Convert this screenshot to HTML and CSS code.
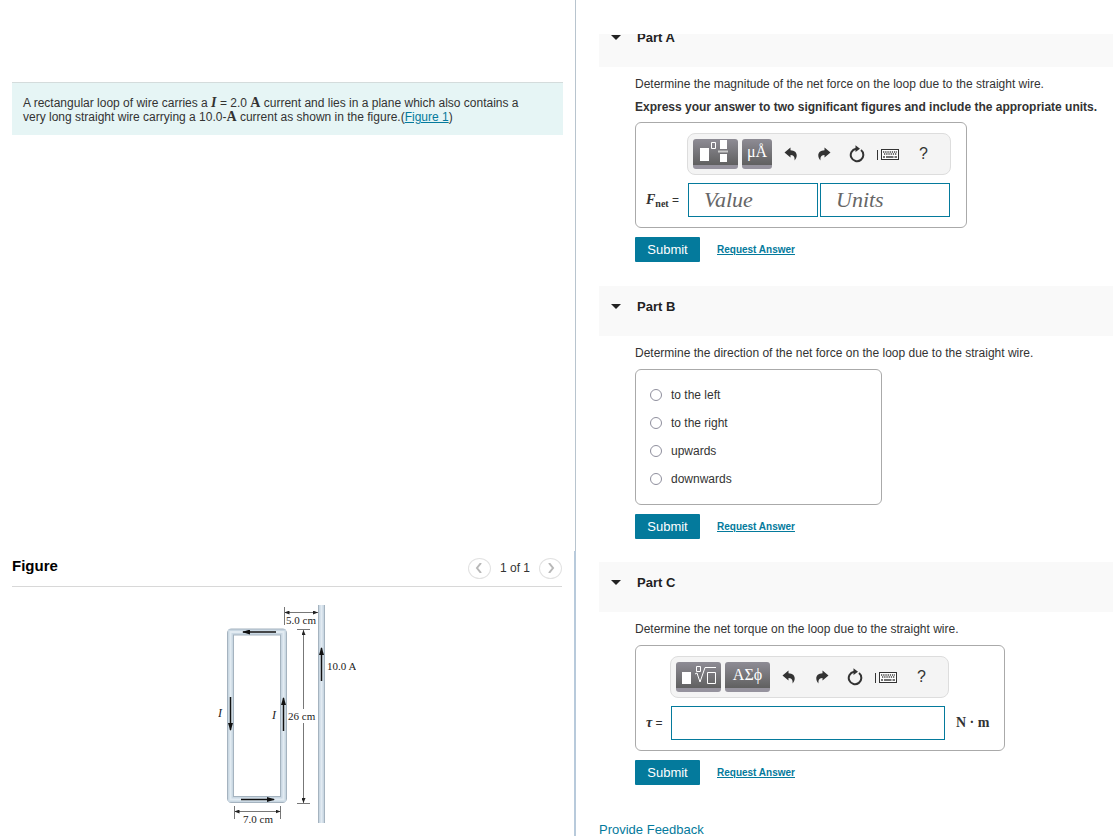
FILE: index.html
```html
<!DOCTYPE html>
<html lang="en">
  <head>
    <meta charset="UTF-8" />
    <meta name="viewport" content="width=device-width, initial-scale=1.0" />
    <title>Force on a Loop</title>
    <link rel="stylesheet" href="styles.css">
  </head>
  <body>
    <svg class="symbols" width="0" height="0" aria-hidden="true">
      <symbol id="undo" viewBox="0 0 14 14">
        <path d="M6.500 .5 L.5 5.500 L6.500 10.500 V8 C9.500 8 11 9.500 10.500 13.500 C14.500 9 13 3.500 6.500 3.300 Z" />
      </symbol>
      <symbol id="redo" viewBox="0 0 14 14">
        <path d="M7.500 .5 L13.500 5.500 L7.500 10.500 V8 C4.500 8 3 9.500 3.500 13.500 C-.5 9 1 3.500 7.500 3.300 Z" />
      </symbol>
      <symbol id="reset" viewBox="0 0 16 18">
        <path d="M12 5 A6.300 6.300 0 1 1 7 3.700" fill="none" stroke="#333" stroke-width="2" />
        <path d="M6.500 .3 L11 3.800 L6.500 7 Z" />
      </symbol>
      <symbol id="keyboard" viewBox="0 0 22 14">
        <path d="M.5 3 V13" stroke="#333" fill="none" />
        <rect x="4.500" y="2.500" width="17" height="10" fill="#fff" stroke="#333" />
        <path d="M6 5 H20 M7 7 H20" stroke="#444" stroke-width="1.300" stroke-dasharray="1.300 .9" fill="none" />
        <path d="M6 10 H8 M9 10 H16.500 M17.500 10 H20" stroke="#444" stroke-width="1.500" fill="none" />
      </symbol>
    </svg>

    <div class="page">
      <div class="left">
        <div class="problem">
          <div class="intro">
            A rectangular loop of wire carries a <i class="math">I</i> = 2.0 <span class="math">A</span> current and lies in a plane which also contains a very long straight wire carrying a 10.0-<span class="math">A</span> current as shown in the figure.(<a href="#figure">Figure 1</a>)
          </div>
        </div>
        <div class="figure" id="figure">
          <div class="figure-head">
            <h2>Figure</h2>
            <div class="pager">
              <button class="round" aria-label="Previous figure"><svg width="8" height="10"><path d="M6 0 L2 5 L6 10" /></svg></button>
              <span>1 of 1</span>
              <button class="round" aria-label="Next figure"><svg width="8" height="10"><path d="M2 0 L6 5 L2 10" /></svg></button>
            </div>
          </div>
          <svg class="diagram" width="138" height="220" viewBox="0 0 138 220">
            <defs>
              <marker id="head" markerWidth="8" markerHeight="5" refX="7" refY="2.500" orient="auto" markerUnits="userSpaceOnUse">
                <path d="M0 0 L8 2.500 L0 5 Z" fill="#111" />
              </marker>
              <marker id="dim" markerWidth="5" markerHeight="4" refX="5" refY="2" orient="auto-start-reverse" markerUnits="userSpaceOnUse">
                <path d="M0 0 L5 2 L0 4 Z" fill="#222" />
              </marker>
            </defs>
            <!-- loop and straight wire -->
            <rect class="tube-edge" x="12.500" y="28" width="53" height="167.500" rx="1" />
            <rect class="tube" x="12.500" y="28" width="53" height="167.500" />
            <rect class="tube-shine" x="12.500" y="28" width="53" height="167.500" />
            <path class="tube-edge" d="M103.500 1 V219" />
            <path class="tube" d="M103.500 1 V219" />
            <path class="tube-shine" d="M103.500 1 V219" />
            <!-- current arrows -->
            <g class="current">
              <path d="M58 28 H25" />
              <path d="M12.500 93 V126" />
              <path d="M65.500 127 V94" />
              <path d="M23 195.500 H56" />
              <path d="M103.500 77 V44" />
            </g>
            <!-- dimensions -->
            <g class="ticks">
              <path d="M66.500 3 V21 M79 25.500 H92 M79 199.500 H92 M16.500 202 V215 M62.500 202 V215" />
            </g>
            <g class="dims">
              <path d="M66.500 8.500 H100" marker-start="url(#dim)" marker-end="url(#dim)" />
              <path d="M85.500 105 V26" marker-end="url(#dim)" />
              <path d="M85.500 119 V199" marker-end="url(#dim)" />
              <path d="M16.500 207.500 H62.500" marker-start="url(#dim)" marker-end="url(#dim)" />
            </g>
            <text x="68" y="20">5.0 cm</text>
            <text x="109" y="66">10.0 A</text>
            <text x="70" y="116">26 cm</text>
            <text x="25" y="219">7.0 cm</text>
            <text class="it" x="0" y="113">I</text>
            <text class="it" x="54" y="115">I</text>
          </svg>
        </div>
      </div>

      <div class="right">
        <div class="part first">
          <div class="part-head"><span class="caret"></span><h3>Part A</h3></div>
          <div class="part-body">
            <p>Determine the magnitude of the net force on the loop due to the straight wire.</p>
            <p class="instruct">Express your answer to two significant figures and include the appropriate units.</p>
            <div class="answer">
              <div class="toolbar">
                <button class="tool wide" aria-label="Templates">
                  <svg width="45" height="26"><path d="M7 9 H16 V22 H7 Z M27 1 H34 V10 H27 Z M27 15 H34 V23 H27 Z" fill="#fff" /><path d="M18.500 3.500 H22.500 V9.500 H18.500 Z" fill="none" stroke="#fff" /><path d="M25 12.500 H35" stroke="#ccc" stroke-width="2" /></svg>
                </button>
                <button class="tool">μÅ</button>
                <button class="icon" aria-label="Undo"><svg width="14" height="14"><use href="#undo" /></svg></button>
                <button class="icon" aria-label="Redo"><svg width="14" height="14"><use href="#redo" /></svg></button>
                <button class="icon" aria-label="Reset"><svg width="16" height="18"><use href="#reset" /></svg></button>
                <button class="icon keys" aria-label="Keyboard shortcuts"><svg width="22" height="14"><use href="#keyboard" /></svg></button>
                <button class="icon">?</button>
              </div>
              <label class="lbl" for="value"><i class="math">F</i><span class="math sub">net</span> =</label>
              <div class="fields">
                <input type="text" id="value" placeholder="Value" />
                <input type="text" id="units" placeholder="Units" aria-label="Units" />
              </div>
            </div>
            <div class="actions"><button class="submit">Submit</button><a href="#">Request Answer</a></div>
          </div>
        </div>

        <div class="part">
          <div class="part-head"><span class="caret"></span><h3>Part B</h3></div>
          <div class="part-body">
            <p>Determine the direction of the net force on the loop due to the straight wire.</p>
            <div class="choices">
              <label><input type="radio" name="dir" />to the left</label>
              <label><input type="radio" name="dir" />to the right</label>
              <label><input type="radio" name="dir" />upwards</label>
              <label><input type="radio" name="dir" />downwards</label>
            </div>
            <div class="actions"><button class="submit">Submit</button><a href="#">Request Answer</a></div>
          </div>
        </div>

        <div class="part">
          <div class="part-head"><span class="caret"></span><h3>Part C</h3></div>
          <div class="part-body">
            <p>Determine the net torque on the loop due to the straight wire.</p>
            <div class="answer torque">
              <div class="toolbar">
                <button class="tool wide" aria-label="Templates">
                  <svg width="45" height="26"><path d="M6 10 H15 V22 H6 Z" fill="#fff" /><path d="M20.500 4.500 H24.500 V9.500 H20.500 Z M31.500 10.500 H39.500 V21.500 H31.500 Z M19 12 L21 11 L24 20 L29 5.500 H40" fill="none" stroke="#fff" /></svg>
                </button>
                <button class="tool wide">ΑΣϕ</button>
                <button class="icon" aria-label="Undo"><svg width="14" height="14"><use href="#undo" /></svg></button>
                <button class="icon" aria-label="Redo"><svg width="14" height="14"><use href="#redo" /></svg></button>
                <button class="icon" aria-label="Reset"><svg width="16" height="18"><use href="#reset" /></svg></button>
                <button class="icon keys" aria-label="Keyboard shortcuts"><svg width="22" height="14"><use href="#keyboard" /></svg></button>
                <button class="icon">?</button>
              </div>
              <label class="lbl" for="torque"><i class="math">τ</i> =</label>
              <div class="fields"><input type="text" id="torque" /></div>
              <span class="math unit">N · m</span>
            </div>
            <div class="actions"><button class="submit">Submit</button><a href="#">Request Answer</a></div>
          </div>
        </div>

        <a class="feedback" href="#">Provide Feedback</a>
      </div>
    </div>
  </body>
</html>
```

FILE: styles.css
```css
* {
  box-sizing: border-box;
}
body {
  margin: 0;
  background-color: #fff;
  color: #333;
  font: 12px/15px "Liberation Sans", Arial, sans-serif;
}
a {
  color: #047a9c;
}
button {
  border: 0;
  padding: 0;
  background: none;
  color: #333;
  font-family: inherit;
}
.symbols {
  position: absolute;
}
.page {
  display: grid;
  grid-template-columns: 576fr 537fr;
  height: 100vh;
  overflow: hidden;
}

/* left column */
.left {
  display: flex;
  flex-direction: column;
  min-height: 0;
}
.problem {
  flex: 1;
  padding: 82px 12px 0;
  border-right: 1px solid #b8c4ce;
}
.intro {
  padding: 13px 24px 11px 11px;
  border-top: 1px solid #d4dcdc;
  background-color: #e6f5f5;
  line-height: 14px;
}
.math {
  font-family: "Liberation Serif", serif;
  font-size: 14px;
  font-weight: bold;
  line-height: 1;
}
.figure {
  padding: 6px 12px 12px;
  border-right: 2px solid #b8cadb;
}
.figure-head {
  display: flex;
  justify-content: space-between;
  height: 30px;
  border-bottom: 1px solid #d8d8d8;
}
h2 {
  margin: 0;
  color: #000;
  font-size: 15px;
  line-height: 18px;
}
.pager {
  display: flex;
  align-items: center;
  gap: 9px;
  height: 22px;
}
.round {
  display: flex;
  align-items: center;
  justify-content: center;
  width: 23px;
  height: 21px;
  border: 1px solid #e2e2e2;
  border-radius: 50%;
}
.round path {
  fill: none;
  stroke: #b8b8b8;
  stroke-width: 2;
}
.diagram {
  display: block;
  margin: 17px auto 0;
}
.diagram text {
  font: 11px "Liberation Serif", serif;
  fill: #222;
}
.diagram .it {
  font-size: 12px;
  font-style: italic;
}
.tube-edge,
.tube,
.tube-shine {
  fill: none;
}
.tube-edge {
  stroke: #a5b3bf;
  stroke-width: 7;
}
.tube {
  stroke: #cad8e3;
  stroke-width: 5;
}
.tube-shine {
  stroke: #e2ebf2;
  stroke-width: 2;
}
.current path {
  fill: none;
  stroke: #111;
  stroke-width: 1.5;
  marker-end: url(#head);
}
.dims path,
.ticks path {
  fill: none;
  stroke: #777;
}

/* right column */
.right {
  margin-top: 34px;
  padding-left: 23px;
  overflow: hidden;
}
.part {
  margin-bottom: 23px;
}
.first {
  margin-top: -17px;
  margin-bottom: 24px;
}
.part-head {
  display: flex;
  align-items: center;
  gap: 16px;
  height: 50px;
  padding: 0 12px 10px;
  background-color: #f9f9f9;
}
.caret {
  border: 5px solid transparent;
  border-top-color: #222;
  border-bottom: 0;
}
h3 {
  margin: 0;
  color: #222;
  font-size: 13px;
}
.part-body {
  padding: 10px 0 0 36px;
}
p {
  margin: 0 0 8px;
}
.instruct {
  margin-bottom: 7px;
  font-weight: bold;
}
.answer {
  display: grid;
  grid-template-columns: 41px auto;
  row-gap: 8px;
  align-items: center;
  width: fit-content;
  padding: 10px 15px 10px 10px;
  border: 1px solid #aaa;
  border-radius: 6px;
}
.torque {
  grid-template-columns: 24px auto auto;
}
.toolbar {
  display: flex;
  grid-column: 2;
  align-items: center;
  height: 42px;
  padding: 0 10px 0 5px;
  border: 1px solid #ddd;
  border-radius: 8px;
  background-color: #f4f4f4;
}
.tool {
  width: 30px;
  height: 30px;
  margin-right: 2px;
  border-bottom: 4px solid #96939e;
  border-radius: 3px;
  background: linear-gradient(#8e8c95, #606060);
  color: #fff;
  font: 16px/26px "Liberation Serif", serif;
}
.tool + .tool {
  margin-left: 2px;
}
.tool svg {
  display: block;
}
.wide {
  width: 45px;
}
.icon {
  display: flex;
  align-items: center;
  justify-content: center;
  width: 33px;
  height: 30px;
  font-size: 16px;
}
.icon svg {
  fill: #333;
}
.icon:last-child {
  margin-left: 4px;
}
.keys {
  width: 30px;
}
.lbl {
  grid-column: 1;
  white-space: nowrap;
}
.lbl .sub {
  position: relative;
  top: 3px;
  font-size: 10px;
}
.fields {
  display: flex;
  gap: 2px;
  padding: 0 1px;
}
.fields input {
  flex: 1;
  min-width: 0;
  width: 130px;
  height: 34px;
  padding: 0 15px;
  border: 1px solid #047a9c;
  font: italic 22px "Liberation Serif", serif;
}
.fields input::placeholder {
  color: #666;
}
.torque .fields {
  padding-right: 4px;
}
.unit {
  margin-left: 7px;
}
.actions {
  display: flex;
  align-items: center;
  gap: 17px;
  margin-top: 9px;
}
.actions a {
  font-size: 10px;
  font-weight: bold;
}
.submit {
  width: 65px;
  height: 25px;
  border-radius: 1px;
  background-color: #047a9c;
  color: #fff;
  font-size: 13px;
}
.choices {
  display: flex;
  flex-direction: column;
  width: 247px;
  padding: 11px 14px;
  border: 1px solid #aaa;
  border-radius: 6px;
}
.choices label {
  display: flex;
  align-items: center;
  gap: 9px;
  height: 28px;
}
.choices input {
  appearance: none;
  width: 12px;
  height: 12px;
  margin: 0;
  border: 1px solid #8f8f9d;
  border-radius: 50%;
}
.choices input:checked {
  background-color: #047a9c;
}
.feedback {
  display: inline-block;
  margin-top: 14px;
  font-size: 13px;
  text-decoration: none;
}
```
